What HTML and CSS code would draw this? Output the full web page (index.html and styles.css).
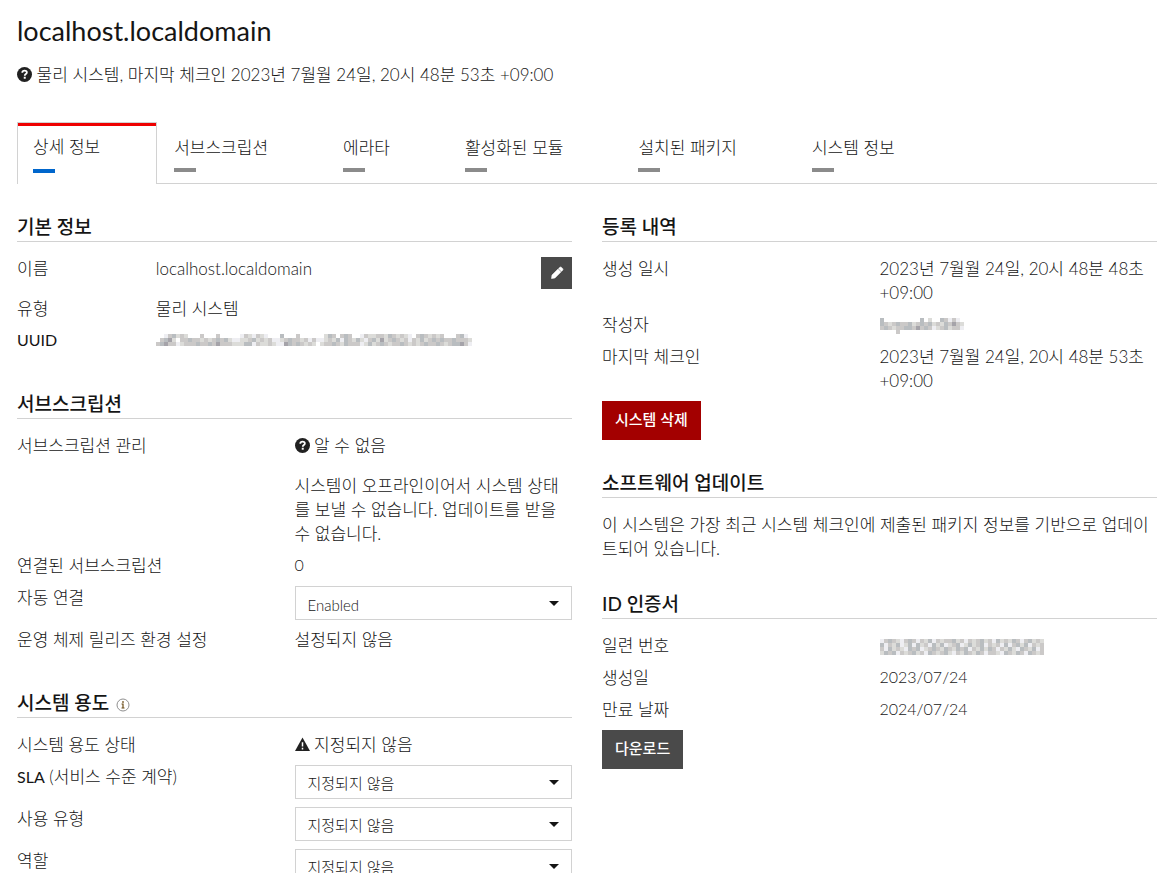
FILE: index.html
```html
<!DOCTYPE html>
<html lang="ko">
<head>
    <meta charset="UTF-8">
    <meta name="viewport" content="width=device-width, initial-scale=1.0">
    <title>localhost.localdomain</title>
    <link rel="stylesheet" href="styles.css">
</head>
<body>
    <header class="page-header">
        <h1>localhost.localdomain</h1>
        <p class="status">
            <svg class="icon" viewBox="0 0 16 16" aria-hidden="true"><circle cx="8" cy="8" r="8" fill="#212121"/><path d="M5.6 6.1C5.7 4.7 6.7 3.9 8.1 3.9c1.4 0 2.4.8 2.4 2 0 1.7-2.2 1.6-2.2 3.3" fill="none" stroke="#fff" stroke-width="1.9"/><rect x="7.2" y="10.4" width="2.1" height="2.1" fill="#fff"/></svg>
            물리 시스템, 마지막 체크인 2023년 7월월 24일, 20시 48분 53초 +09:00
        </p>
    </header>

    <nav class="tabs">
        <a class="tab active" href="#">상세 정보</a>
        <a class="tab" href="#">서브스크립션</a>
        <a class="tab" href="#">에라타</a>
        <a class="tab" href="#">활성화된 모듈</a>
        <a class="tab" href="#">설치된 패키지</a>
        <a class="tab" href="#">시스템 정보</a>
    </nav>

    <main class="columns">
        <div class="column">
            <section>
                <h2>기본 정보</h2>
                <dl class="narrow">
                    <dt>이름</dt>
                    <dd class="editable">localhost.localdomain
                        <button class="edit" type="button" aria-label="이름 편집"><svg viewBox="0 0 14 14" aria-hidden="true"><path d="M1.5 12.5 2 9.1 8 3.1 10.9 6 4.9 12zM8.6 2.5 9.7 1.4q.9-.8 1.8 0l1.1 1.1q.8.9 0 1.8l-1.1 1.1z" fill="#fff" stroke="#fff" stroke-width=".6"/></svg></button>
                    </dd>
                    <dt>유형</dt>
                    <dd>물리 시스템</dd>
                    <dt class="latin">UUID</dt>
                    <dd><svg class="mosaic" id="uuid" aria-hidden="true"></svg></dd>
                </dl>
            </section>

            <section>
                <h2>서브스크립션</h2>
                <dl>
                    <dt>서브스크립션 관리</dt>
                    <dd>
                        <p><svg class="icon" viewBox="0 0 16 16" aria-hidden="true"><circle cx="8" cy="8" r="8" fill="#212121"/><path d="M5.6 6.1C5.7 4.7 6.7 3.9 8.1 3.9c1.4 0 2.4.8 2.4 2 0 1.7-2.2 1.6-2.2 3.3" fill="none" stroke="#fff" stroke-width="1.9"/><rect x="7.2" y="10.4" width="2.1" height="2.1" fill="#fff"/></svg> 알 수 없음</p>
                        <p class="note">시스템이 오프라인이어서 시스템 상태를 보낼 수 없습니다. 업데이트를 받을 수 없습니다.</p>
                    </dd>
                    <dt>연결된 서브스크립션</dt>
                    <dd class="latin">0</dd>
                    <dt><label for="auto">자동 연결</label></dt>
                    <dd class="select"><select class="latin-select" id="auto"><option>Enabled</option><option>Disabled</option></select></dd>
                    <dt>운영 체제 릴리즈 환경 설정</dt>
                    <dd>설정되지 않음</dd>
                </dl>
            </section>

            <section>
                <h2>시스템 용도 <svg class="info" viewBox="0 0 14 14" aria-hidden="true"><circle cx="7" cy="7" r="6" fill="none" stroke="#8f8f8f"/><path d="M7 3v2M5.5 6H7v4M5.5 10h3" fill="none" stroke="#6b4b16" stroke-width="1.2"/></svg></h2>
                <dl>
                    <dt>시스템 용도 상태</dt>
                    <dd><svg class="icon" viewBox="0 0 16 16" aria-hidden="true"><path d="M8 .5 16 15H0z" fill="#212121"/><path d="M8 5.5v4.7M8 11.5v1.8" stroke="#fff" stroke-width="1.6"/></svg> 지정되지 않음</dd>
                    <dt><label for="sla"><span class="acronym">SLA</span> (서비스 수준 계약)</label></dt>
                    <dd class="select"><select id="sla"><option>지정되지 않음</option></select></dd>
                    <dt><label for="usage">사용 유형</label></dt>
                    <dd class="select"><select id="usage"><option>지정되지 않음</option></select></dd>
                    <dt><label for="role">역할</label></dt>
                    <dd class="select"><select id="role"><option>지정되지 않음</option></select></dd>
                </dl>
            </section>
        </div>

        <div class="column">
            <section>
                <h2>등록 내역</h2>
                <dl>
                    <dt>생성 일시</dt>
                    <dd>2023년 7월월 24일, 20시 48분 48초 +09:00</dd>
                    <dt>작성자</dt>
                    <dd><svg class="mosaic" id="creator" aria-hidden="true"></svg></dd>
                    <dt>마지막 체크인</dt>
                    <dd>2023년 7월월 24일, 20시 48분 53초 +09:00</dd>
                </dl>
                <button class="button danger" type="button">시스템 삭제</button>
            </section>

            <section>
                <h2>소프트웨어 업데이트</h2>
                <p>이 시스템은 가장 최근 시스템 체크인에 제출된 패키지 정보를 기반으로 업데이트되어 있습니다.</p>
            </section>

            <section>
                <h2>ID 인증서</h2>
                <dl>
                    <dt>일련 번호</dt>
                    <dd><svg class="mosaic" id="serial" aria-hidden="true"></svg></dd>
                    <dt>생성일</dt>
                    <dd class="latin">2023/07/24</dd>
                    <dt>만료 날짜</dt>
                    <dd class="latin">2024/07/24</dd>
                </dl>
                <button class="button" type="button">다운로드</button>
            </section>
        </div>
    </main>
    <script src="mosaic.js"></script>
</body>
</html>
```

FILE: styles.css
```css
* { box-sizing: border-box; }
body { margin: 0; padding: 15px 2px 0 17px; height: 100vh; overflow: hidden; background: #fff; color: #151515; font-family: Lato, "Noto Sans CJK KR", sans-serif; font-size: 17px; font-weight: 300; line-height: 24px; }
h1, h2, p, dl, dd { margin: 0; }
h1 { font-size: 27px; font-weight: 400; line-height: 32px; }
.status { margin-top: 16px; }
.icon { width: 15px; height: 15px; vertical-align: -1px; }

/* tabs */
.tabs { display: flex; align-items: flex-end; margin-top: 35px; border-bottom: 1px solid #d2d2d2; }
.tab { padding: 13px 58px 11px 17px; color: #151515; text-decoration: none; }
.tab::after { content: ""; display: block; width: 22px; height: 4px; margin-top: 8px; background: #8b8b8b; }
.tab.active { margin-bottom: -1px; padding: 12px 56px 11px 15px; background: #fff; border: 1px solid #d2d2d2; border-bottom: 0; box-shadow: inset 0 3px #e00; }
.tab.active::after { margin-top: 10px; background: #06c; }

/* content */
.columns { display: grid; grid-template-columns: 1fr 1fr; gap: 30px; margin-top: 30px; }
.column { display: flex; flex-direction: column; gap: 30px; }
h2 { margin-bottom: 15px; padding: 1px 0 2px; border-bottom: 1px solid #d2d2d2; font-size: 19px; font-weight: 500; line-height: 24px; }
dl { display: grid; grid-template-columns: 1fr 1fr; grid-auto-rows: minmax(24px, auto); row-gap: 8px; padding-bottom: 8px; }
dl.narrow { grid-template-columns: 1fr 3fr; }
.acronym, dt.latin { font-weight: 400; }
.acronym, .latin { font-size: 16px; }
.latin { line-height: 22px; }
.note { margin-top: 16px; }
.info { width: 14px; height: 14px; margin-left: 2px; vertical-align: -2px; }
.mosaic { display: block; margin-top: 5px; }

/* controls */
.editable { display: flex; justify-content: space-between; }
.edit { display: flex; align-items: center; justify-content: center; width: 31px; height: 32px; padding: 0; border: 0; background: #4a4a4a; }
.edit svg { width: 14px; height: 14px; }
.select { display: grid; align-items: center; }
.select::after { content: ""; grid-area: 1 / 1; justify-self: end; margin-right: 13px; border: 5px solid transparent; border-top-color: #151515; border-bottom: 0; pointer-events: none; }
select { grid-area: 1 / 1; width: 100%; height: 34px; padding: 2px 12px 0; appearance: none; border: 1px solid #d2d2d2; border-radius: 0; background: #fff; color: #151515; font: inherit; font-size: 15px; }
.latin-select { padding-top: 3px; }
.button { display: block; height: 39px; padding: 0 13px 3px; border: 0; background: #4a4a4a; color: #fff; font: inherit; font-size: 15px; font-weight: 500; }
.button.danger { background: #a30000; }
```

FILE: mosaic.js
```javascript
// Masked values, drawn as 4px cells. Each digit picks a shade, 0 is empty.
const shades = ['', '#eeeef2', '#dcdcd9', '#cbc9c8', '#b9bdc0', '#a5a3a9'];

const masks = {
    uuid: [
        '0013423200030003000001321321000400030000002430343001322332432321034323230003410',
        '0345203343323234342112234232311234332313112324143242134252343231324234343343332',
        '3453312333433435333222441322321154343232023343243331242343233432323433432344531'
    ],
    creator: [
        '400000000040200431310',
        '432343342343423243532',
        '343233443534312342331',
        '000030000000000000000'
    ],
    serial: [
        '13432134313241323342313234231423243134232',
        '41324124142314241234124234132314134241323',
        '31423214341234324324341324243132421432413',
        '24341323423143234213243243133214324314323'
    ]
};

for (const id in masks) {
    const svg = document.getElementById(id);
    svg.setAttribute('width', masks[id][0].length * 4);
    svg.setAttribute('height', masks[id].length * 4);
    masks[id].forEach((row, y) => {
        [...row].forEach((cell, x) => {
            if (cell === '0') return;
            const rect = document.createElementNS('http://www.w3.org/2000/svg', 'rect');
            rect.setAttribute('x', x * 4);
            rect.setAttribute('y', y * 4);
            rect.setAttribute('width', 4);
            rect.setAttribute('height', 4);
            rect.setAttribute('fill', shades[cell]);
            svg.appendChild(rect);
        });
    });
}
```
